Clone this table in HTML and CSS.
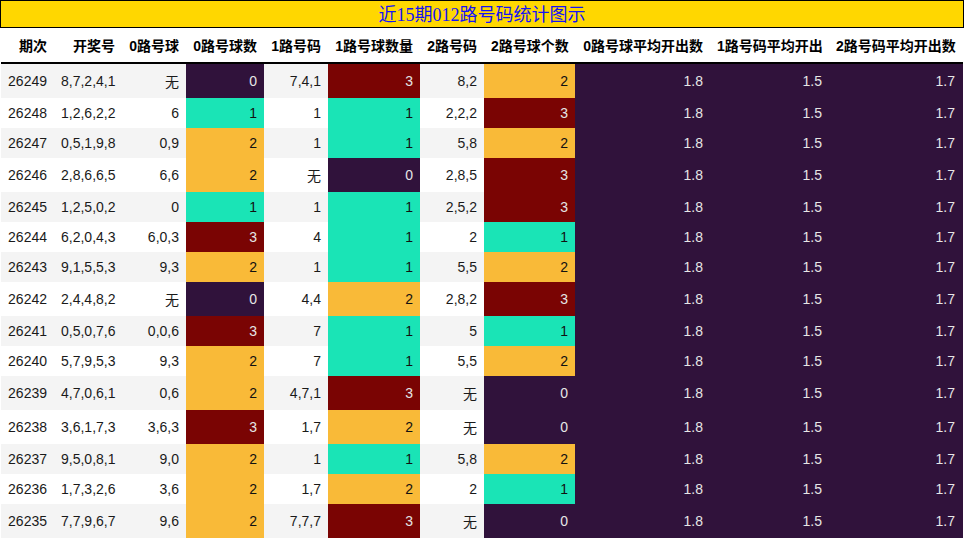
FILE: index.html
```html
<!DOCTYPE html>
<html lang="zh">
<head>
<meta charset="utf-8">
<title>近15期012路号码统计图示</title>
<link rel="stylesheet" href="styles.css">
</head>
<body>
<div class="title">近15期012路号码统计图示</div>
<table class="stats">
  <colgroup>
    <col class="w53"><col class="w68"><col class="w64"><col class="w78"><col class="w64"><col class="w92"><col class="w64"><col class="w91"><col class="w135"><col class="w119"><col class="w134">
  </colgroup>
  <thead>
    <tr><th>期次</th><th>开奖号</th><th>0路号球</th><th>0路号球数</th><th>1路号码</th><th>1路号球数量</th><th>2路号码</th><th>2路号球个数</th><th>0路号球平均开出数</th><th>1路号码平均开出</th><th>2路号码平均开出数</th></tr>
  </thead>
  <tbody>
    <tr><td>26249</td><td>8,7,2,4,1</td><td>无</td><td class="c0">0</td><td>7,4,1</td><td class="c3">3</td><td>8,2</td><td class="c2">2</td><td class="c0">1.8</td><td class="c0">1.5</td><td class="c0">1.7</td></tr>
    <tr><td>26248</td><td>1,2,6,2,2</td><td>6</td><td class="c1">1</td><td>1</td><td class="c1">1</td><td>2,2,2</td><td class="c3">3</td><td class="c0">1.8</td><td class="c0">1.5</td><td class="c0">1.7</td></tr>
    <tr><td>26247</td><td>0,5,1,9,8</td><td>0,9</td><td class="c2">2</td><td>1</td><td class="c1">1</td><td>5,8</td><td class="c2">2</td><td class="c0">1.8</td><td class="c0">1.5</td><td class="c0">1.7</td></tr>
    <tr><td>26246</td><td>2,8,6,6,5</td><td>6,6</td><td class="c2">2</td><td>无</td><td class="c0">0</td><td>2,8,5</td><td class="c3">3</td><td class="c0">1.8</td><td class="c0">1.5</td><td class="c0">1.7</td></tr>
    <tr><td>26245</td><td>1,2,5,0,2</td><td>0</td><td class="c1">1</td><td>1</td><td class="c1">1</td><td>2,5,2</td><td class="c3">3</td><td class="c0">1.8</td><td class="c0">1.5</td><td class="c0">1.7</td></tr>
    <tr><td>26244</td><td>6,2,0,4,3</td><td>6,0,3</td><td class="c3">3</td><td>4</td><td class="c1">1</td><td>2</td><td class="c1">1</td><td class="c0">1.8</td><td class="c0">1.5</td><td class="c0">1.7</td></tr>
    <tr><td>26243</td><td>9,1,5,5,3</td><td>9,3</td><td class="c2">2</td><td>1</td><td class="c1">1</td><td>5,5</td><td class="c2">2</td><td class="c0">1.8</td><td class="c0">1.5</td><td class="c0">1.7</td></tr>
    <tr><td>26242</td><td>2,4,4,8,2</td><td>无</td><td class="c0">0</td><td>4,4</td><td class="c2">2</td><td>2,8,2</td><td class="c3">3</td><td class="c0">1.8</td><td class="c0">1.5</td><td class="c0">1.7</td></tr>
    <tr><td>26241</td><td>0,5,0,7,6</td><td>0,0,6</td><td class="c3">3</td><td>7</td><td class="c1">1</td><td>5</td><td class="c1">1</td><td class="c0">1.8</td><td class="c0">1.5</td><td class="c0">1.7</td></tr>
    <tr><td>26240</td><td>5,7,9,5,3</td><td>9,3</td><td class="c2">2</td><td>7</td><td class="c1">1</td><td>5,5</td><td class="c2">2</td><td class="c0">1.8</td><td class="c0">1.5</td><td class="c0">1.7</td></tr>
    <tr><td>26239</td><td>4,7,0,6,1</td><td>0,6</td><td class="c2">2</td><td>4,7,1</td><td class="c3">3</td><td>无</td><td class="c0">0</td><td class="c0">1.8</td><td class="c0">1.5</td><td class="c0">1.7</td></tr>
    <tr><td>26238</td><td>3,6,1,7,3</td><td>3,6,3</td><td class="c3">3</td><td>1,7</td><td class="c2">2</td><td>无</td><td class="c0">0</td><td class="c0">1.8</td><td class="c0">1.5</td><td class="c0">1.7</td></tr>
    <tr><td>26237</td><td>9,5,0,8,1</td><td>9,0</td><td class="c2">2</td><td>1</td><td class="c1">1</td><td>5,8</td><td class="c2">2</td><td class="c0">1.8</td><td class="c0">1.5</td><td class="c0">1.7</td></tr>
    <tr><td>26236</td><td>1,7,3,2,6</td><td>3,6</td><td class="c2">2</td><td>1,7</td><td class="c2">2</td><td>2</td><td class="c1">1</td><td class="c0">1.8</td><td class="c0">1.5</td><td class="c0">1.7</td></tr>
    <tr><td>26235</td><td>7,7,9,6,7</td><td>9,6</td><td class="c2">2</td><td>7,7,7</td><td class="c3">3</td><td>无</td><td class="c0">0</td><td class="c0">1.8</td><td class="c0">1.5</td><td class="c0">1.7</td></tr>
  </tbody>
</table>
</body>
</html>
```

FILE: styles.css
```css
html, body {
  margin: 0;
  padding: 0;
  background: #ffffff;
}

.title {
  width: 962px;
  height: 26px;
  border: 1px solid #000;
  background: #ffd700;
  color: #1414f5;
  font-family: "Liberation Serif", "Noto Sans CJK SC", serif;
  font-size: 18px;
  line-height: 28px;
  text-align: center;
}

.stats {
  margin: 0 0 0 1px;
  width: 962px;
  table-layout: fixed;
  border-collapse: collapse;
  font-family: "Liberation Sans", "Noto Sans CJK SC", sans-serif;
  font-size: 14px;
  color: #1a1a1a;
}

.w53 { width: 53px; }
.w68 { width: 68px; }
.w64 { width: 64px; }
.w78 { width: 78px; }
.w92 { width: 92px; }
.w91 { width: 91px; }
.w135 { width: 135px; }
.w119 { width: 119px; }
.w134 { width: 134px; }

.stats th,
.stats td {
  padding: 7px 7px;
  text-align: right;
  white-space: nowrap;
  overflow: hidden;
}

.stats th:last-child,
.stats td:last-child {
  padding-right: 8px;
}

.stats th {
  font-weight: bold;
  color: #000;
  border-bottom: 2px solid #000;
}

.stats tbody tr:nth-child(odd) {
  background: #f4f4f4;
}

.stats tbody tr:nth-child(even) {
  background: #ffffff;
}

.stats td.c0 { background: #30123b; color: #e6e6e6; }
.stats td.c1 { background: #1ae4b6; color: #111; }
.stats td.c2 { background: #f9ba38; color: #111; }
.stats td.c3 { background: #7a0403; color: #e6e6e6; }
```
